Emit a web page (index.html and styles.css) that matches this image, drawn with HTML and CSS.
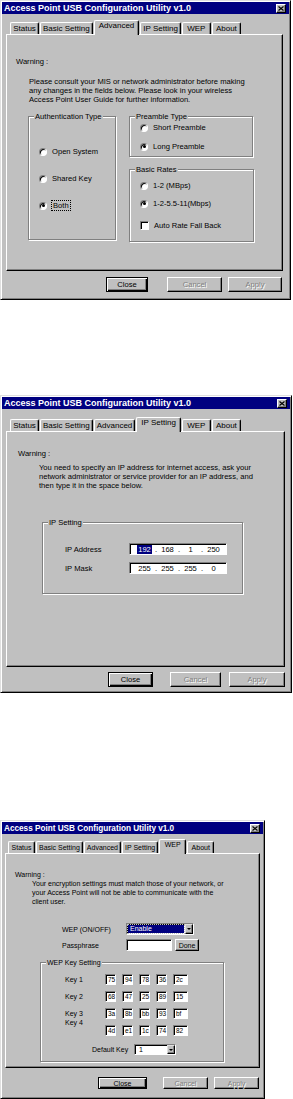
FILE: index.html
```html
<!DOCTYPE html>
<html lang="en">
<head>
  <meta charset="UTF-8">
  <meta name="viewport" content="width=device-width, initial-scale=1.0">
  <title>Access Point USB Configuration Utility</title>
  <link rel="stylesheet" href="styles.css">
</head>
<body>

  <!-- Advanced tab -->
  <div class="dlg dlg-adv">
    <div class="titlebar">
      <span class="title">Access Point USB Configuration Utility v1.0</span>
      <span class="xbtn"><svg width="6" height="5" viewBox="0 0 6 5"><path d="M0.5 0.5L5.5 4.5M5.5 0.5L0.5 4.5" stroke="#000" stroke-width="1.2"/></svg></span>
    </div>
    <div class="tabs">
      <span class="tab">Status</span>
      <span class="tab">Basic Setting</span>
      <span class="tab active">Advanced</span>
      <span class="tab">IP Setting</span>
      <span class="tab">WEP</span>
      <span class="tab">About</span>
    </div>
    <div class="panel">
      <p class="warn">Warning :</p>
      <p class="msg">Please consult your MIS or network administrator before making<br>any changes in the fields below. Please look in your wireless<br>Access Point User Guide for further information.</p>
      <div class="adv-groups">
        <div class="group auth">
          <span class="legend">Authentication Type</span>
          <div class="opts">
            <div class="opt"><span class="radio"></span>Open System</div>
            <div class="opt"><span class="radio"></span>Shared Key</div>
            <div class="opt"><span class="radio on"></span><span class="focus">Both</span></div>
          </div>
        </div>
        <div class="adv-right">
          <div class="group pre">
            <span class="legend">Preamble Type</span>
            <div class="opts">
              <div class="opt"><span class="radio"></span>Short Preamble</div>
              <div class="opt"><span class="radio on"></span>Long Preamble</div>
            </div>
          </div>
          <div class="group rates">
            <span class="legend">Basic Rates</span>
            <div class="opts">
              <div class="opt"><span class="radio"></span>1-2 (MBps)</div>
              <div class="opt"><span class="radio on"></span>1-2-5.5-11(Mbps)</div>
              <div class="opt opt-check"><span class="check"></span>Auto Rate Fall Back</div>
            </div>
          </div>
        </div>
      </div>
    </div>
    <div class="btns">
      <span class="btn default b-close">Close</span>
      <span class="btn off b-cancel">Cancel</span>
      <span class="btn off b-apply">Apply</span>
    </div>
  </div>

  <!-- IP Setting tab -->
  <div class="dlg dlg-ip">
    <div class="titlebar">
      <span class="title">Access Point USB Configuration Utility v1.0</span>
      <span class="xbtn"><svg width="6" height="5" viewBox="0 0 6 5"><path d="M0.5 0.5L5.5 4.5M5.5 0.5L0.5 4.5" stroke="#000" stroke-width="1.2"/></svg></span>
    </div>
    <div class="tabs">
      <span class="tab">Status</span>
      <span class="tab">Basic Setting</span>
      <span class="tab">Advanced</span>
      <span class="tab active">IP Setting</span>
      <span class="tab">WEP</span>
      <span class="tab">About</span>
    </div>
    <div class="panel">
      <p class="warn">Warning :</p>
      <p class="msg">You need to specify an IP address for internet access, ask your<br>network administrator or service provider for an IP address, and<br>then type it in the space below.</p>
      <div class="group ipbox">
        <span class="legend">IP Setting</span>
        <div class="ip-row">
          <span class="ip-label">IP Address</span>
          <div class="field ip">
            <span class="seg"><span class="sel">192</span></span><span class="dot">.</span>
            <span class="seg">168</span><span class="dot">.</span>
            <span class="seg">1</span><span class="dot">.</span>
            <span class="seg">250</span>
          </div>
        </div>
        <div class="ip-row">
          <span class="ip-label">IP Mask</span>
          <div class="field ip">
            <span class="seg">255</span><span class="dot">.</span>
            <span class="seg">255</span><span class="dot">.</span>
            <span class="seg">255</span><span class="dot">.</span>
            <span class="seg">0</span>
          </div>
        </div>
      </div>
    </div>
    <div class="btns">
      <span class="btn default b-close">Close</span>
      <span class="btn off b-cancel">Cancel</span>
      <span class="btn off b-apply">Apply</span>
    </div>
  </div>

  <!-- WEP tab -->
  <div class="dlg dlg-wep">
    <div class="titlebar">
      <span class="title">Access Point USB Configuration Utility v1.0</span>
      <span class="xbtn"><svg width="6" height="5" viewBox="0 0 6 5"><path d="M0.5 0.5L5.5 4.5M5.5 0.5L0.5 4.5" stroke="#000" stroke-width="1.2"/></svg></span>
    </div>
    <div class="tabs">
      <span class="tab">Status</span>
      <span class="tab">Basic Setting</span>
      <span class="tab">Advanced</span>
      <span class="tab">IP Setting</span>
      <span class="tab active">WEP</span>
      <span class="tab">About</span>
    </div>
    <div class="panel">
      <p class="warn">Warning :</p>
      <p class="msg">Your encryption settings must match those of your network, or<br>your Access Point will not be able to communicate with the<br>client user.</p>
      <div class="wep-row first">
        <span class="wep-label">WEP (ON/OFF)</span>
        <div class="field select wep-sel">
          <span class="sel-val">Enable</span>
          <span class="arrow"></span>
        </div>
      </div>
      <div class="wep-row">
        <span class="wep-label">Passphrase</span>
        <div class="field pass"></div>
        <span class="btn done">Done</span>
      </div>
      <div class="group keybox">
        <span class="legend">WEP Key Setting</span>
        <div class="key-row first">
          <span class="key-label">Key 1</span>
          <span class="field kb">75</span><span class="field kb">94</span><span class="field kb">78</span><span class="field kb">36</span><span class="field kb last">2c</span>
        </div>
        <div class="key-row">
          <span class="key-label">Key 2</span>
          <span class="field kb">68</span><span class="field kb">47</span><span class="field kb">25</span><span class="field kb">89</span><span class="field kb last">15</span>
        </div>
        <div class="key-row">
          <span class="key-label">Key 3</span>
          <span class="field kb">3a</span><span class="field kb">8b</span><span class="field kb">bb</span><span class="field kb">93</span><span class="field kb last">bf</span>
        </div>
        <div class="key-row">
          <span class="key-label key4">Key 4</span>
          <span class="field kb">4d</span><span class="field kb">e1</span><span class="field kb">1c</span><span class="field kb">74</span><span class="field kb last">82</span>
        </div>
        <div class="default-row">
          <span class="default-label">Default Key</span>
          <div class="field select key-sel">
            <span class="sel-plain">1</span>
            <span class="arrow"></span>
          </div>
        </div>
      </div>
    </div>
    <div class="btns">
      <span class="btn default b-close">Close</span>
      <span class="btn off b-cancel">Cancel</span>
      <span class="btn off b-apply">Apply</span>
    </div>
  </div>

</body>
</html>
```

FILE: styles.css
```css
* {
  margin: 0;
  padding: 0;
  box-sizing: border-box;
}

body {
  background: #fff;
  font-family: "Liberation Sans", Arial, sans-serif;
  font-size: 7.6px;
  line-height: 9px;
  color: #000;
}

/* window frame */
.dlg {
  background: #c0c0c0;
  border: 1px solid;
  border-color: #dfdfdf #000 #000 #dfdfdf;
  box-shadow: inset 1px 1px #fff, inset -1px -1px #808080;
  padding: 1px;
}

.dlg-adv {
  width: 291px;
  height: 300px;
}

.dlg-ip {
  width: 292px;
  height: 298px;
  margin-top: 95px;
}

.dlg-wep {
  width: 265px;
  height: 279px;
  margin-top: 127px;
  font-size: 7px;
}

.titlebar {
  height: 12px;
  background: #000080;
  color: #fff;
  display: flex;
  align-items: center;
  justify-content: space-between;
  padding: 0 3px 0 2px;
}

.title {
  font-weight: bold;
  font-size: 9px;
  white-space: nowrap;
}

.dlg-wep .title {
  font-size: 8.2px;
}

.xbtn {
  width: 10px;
  height: 9px;
  background: #c0c0c0;
  border: 1px solid;
  border-color: #fff #000 #000 #fff;
  box-shadow: inset -1px -1px #808080;
  display: flex;
  align-items: center;
  justify-content: center;
}

.xbtn svg {
  display: block;
}

/* tabs */
.tabs {
  display: flex;
  align-items: flex-end;
  height: 14px;
  margin-top: 6px;
  padding-left: 8px;
  position: relative;
  z-index: 1;
}

.dlg-ip .tabs {
  margin-top: 8px;
}

.dlg-wep .tabs {
  margin-top: 5px;
  padding-left: 6px;
}

.tab {
  height: 12px;
  min-width: 29px;
  padding: 0 2px;
  margin-right: 1px;
  border: 1px solid;
  border-bottom: 0;
  border-color: #fff #000 #000 #fff;
  border-radius: 2px 2px 0 0;
  box-shadow: inset -1px 0 #808080;
  background: #c0c0c0;
  font-size: 8px;
  line-height: 11px;
  text-align: center;
  white-space: nowrap;
}

.dlg-wep .tab {
  font-size: 7px;
  min-width: 27px;
}

.tab.active {
  height: 15px;
  margin-bottom: -1px;
  padding: 0 4px;
  line-height: 10px;
}

/* tab page */
.panel {
  margin-left: 4px;
  border: 1px solid;
  border-color: #fff #000 #000 #fff;
  box-shadow: inset -1px -1px #808080;
}

.dlg-adv .panel {
  width: 277px;
  height: 237px;
  padding: 22px 0 0 9px;
}

.dlg-ip .panel {
  width: 279px;
  height: 236px;
  padding: 17px 0 0 11px;
}

.dlg-wep .panel {
  margin-left: 3px;
  width: 255px;
  height: 215px;
  padding: 16px 0 0 9px;
}

.msg {
  margin: 11px 0 0 13px;
  white-space: nowrap;
}

.dlg-ip .msg {
  margin: 5px 0 0 21px;
}

.dlg-wep .msg {
  margin: 0 0 0 17px;
}

/* group boxes */
.group {
  border: 1px solid #808080;
  box-shadow: 1px 1px #fff, inset 1px 1px #fff;
  display: flex;
  flex-direction: column;
  align-items: flex-start;
}

.legend {
  margin: -5px 0 0 5px;
  padding: 0 1px;
  background: #c0c0c0;
  line-height: 9px;
  white-space: nowrap;
}

.adv-groups {
  display: flex;
  align-items: flex-start;
  gap: 13px;
  margin: 12px 0 0 12px;
}

.adv-right {
  display: flex;
  flex-direction: column;
  gap: 12px;
}

.auth {
  width: 88px;
  height: 124px;
}

.pre {
  width: 124px;
  height: 41px;
}

.rates {
  width: 125px;
  height: 73px;
}

.opts {
  display: flex;
  flex-direction: column;
  padding-left: 10px;
}

.auth .opts {
  padding-top: 26px;
  gap: 18px;
}

.pre .opts {
  padding-top: 2px;
  gap: 10px;
}

.rates .opts {
  padding-top: 7px;
  gap: 9px;
}

.rates .opt-check {
  margin-top: 4px;
}

.opt {
  display: flex;
  align-items: center;
  gap: 5px;
  height: 9px;
  white-space: nowrap;
}

.radio {
  width: 8px;
  height: 8px;
  border-radius: 50%;
  background: #fff;
  border: 1px solid;
  border-color: #808080 #fff #fff #808080;
  box-shadow: inset 1px 1px #000;
  display: flex;
  align-items: center;
  justify-content: center;
}

.radio.on::after {
  content: "";
  width: 3px;
  height: 3px;
  border-radius: 50%;
  background: #000;
}

.check {
  width: 9px;
  height: 9px;
  background: #fff;
  border: 1px solid;
  border-color: #808080 #fff #fff #808080;
  box-shadow: inset 1px 1px #000;
}

.focus {
  outline: 1px dotted #000;
  outline-offset: 0;
  padding: 0 1px;
}

/* text fields */
.field {
  background: #fff;
  border: 1px solid;
  border-color: #808080 #fff #fff #808080;
  box-shadow: inset 1px 1px #000;
}

.ipbox {
  width: 201px;
  height: 72px;
  margin: 32px 0 0 24px;
}

.ip-row {
  display: flex;
  align-items: center;
  padding-left: 22px;
  margin-top: 7px;
}

.ip-row:nth-child(2) {
  margin-top: 16px;
}

.ip-label {
  width: 64px;
}

.ip {
  width: 98px;
  height: 12px;
  display: flex;
  align-items: center;
  padding: 0 3px 0 5px;
}

.seg {
  width: 19px;
  text-align: center;
}

.dot {
  width: 4px;
  text-align: center;
}

.sel {
  background: #000080;
  color: #fff;
  padding: 0 1px;
}

/* WEP page */
.wep-row {
  display: flex;
  align-items: center;
  margin: 4px 0 0 47px;
}

.wep-row.first {
  margin-top: 17px;
}

.wep-label {
  width: 64px;
}

.select {
  height: 12px;
  display: flex;
  align-items: stretch;
  padding: 0 0 0 1px;
}

.wep-sel {
  width: 68px;
}

.sel-val {
  flex: 1;
  margin: 1px 1px 1px 0;
  background: #000080;
  color: #fff;
  outline: 1px dotted #c0c0c0;
  padding-left: 2px;
  line-height: 8px;
}

.sel-plain {
  flex: 1;
  padding-left: 3px;
  line-height: 9px;
}

.arrow {
  width: 8px;
  background: #c0c0c0;
  border: 1px solid;
  border-color: #dfdfdf #000 #000 #dfdfdf;
  box-shadow: inset -1px -1px #808080;
  display: flex;
  align-items: center;
  justify-content: center;
}

.arrow::after {
  content: "";
  border-left: 2px solid transparent;
  border-right: 2px solid transparent;
  border-top: 2px solid #000;
}

.pass {
  width: 46px;
  height: 12px;
}

.btn {
  display: flex;
  align-items: center;
  justify-content: center;
  background: #c0c0c0;
  border: 1px solid;
  border-color: #fff #000 #000 #fff;
  box-shadow: inset -1px -1px #808080;
  white-space: nowrap;
}

.done {
  width: 24px;
  height: 12px;
  margin-left: 3px;
}

.keybox {
  width: 184px;
  height: 100px;
  margin: 11px 0 0 25px;
}

.key-row {
  display: flex;
  align-items: center;
  gap: 6px;
  padding-left: 24px;
  margin-top: 6px;
}

.key-row.first {
  margin-top: 7px;
}

.key-label {
  width: 34px;
}

.key4 {
  align-self: flex-start;
  margin-top: -7px;
}

.kb {
  width: 11px;
  height: 11px;
  padding-left: 2px;
  line-height: 9px;
  font-size: 6.5px;
}

.kb.last {
  width: 15px;
}

.default-row {
  display: flex;
  align-items: center;
  padding-left: 51px;
  margin-top: 8px;
}

.default-label {
  width: 42px;
}

.key-sel {
  width: 42px;
  height: 11px;
}

/* bottom buttons */
.btns {
  display: flex;
  justify-content: flex-end;
  margin-top: 6px;
  height: 15px;
}

.dlg-adv .btns {
  width: 281px;
  padding-right: 1px;
}

.dlg-ip .btns {
  margin-top: 5px;
  width: 283px;
}

.dlg-wep .btns {
  margin-top: 9px;
  height: 12px;
  width: 258px;
  padding-right: 1px;
}

.btn.default {
  border-color: #000;
  box-shadow: inset 1px 1px #fff, inset -1px -1px #000, inset -2px -2px #808080;
}

.btn.off {
  color: #808080;
  text-shadow: 1px 1px #fff;
}

.dlg-adv .b-close { width: 42px; margin-right: 19px; }
.dlg-adv .b-cancel { width: 55px; margin-right: 6px; }
.dlg-adv .b-apply { width: 54px; }

.dlg-ip .b-close { width: 45px; margin-right: 17px; }
.dlg-ip .b-cancel { width: 51px; margin-right: 8px; }
.dlg-ip .b-apply { width: 56px; }

.dlg-wep .b-close { width: 49px; margin-right: 16px; }
.dlg-wep .b-cancel { width: 45px; margin-right: 6px; }
.dlg-wep .b-apply { width: 45px; }
```
